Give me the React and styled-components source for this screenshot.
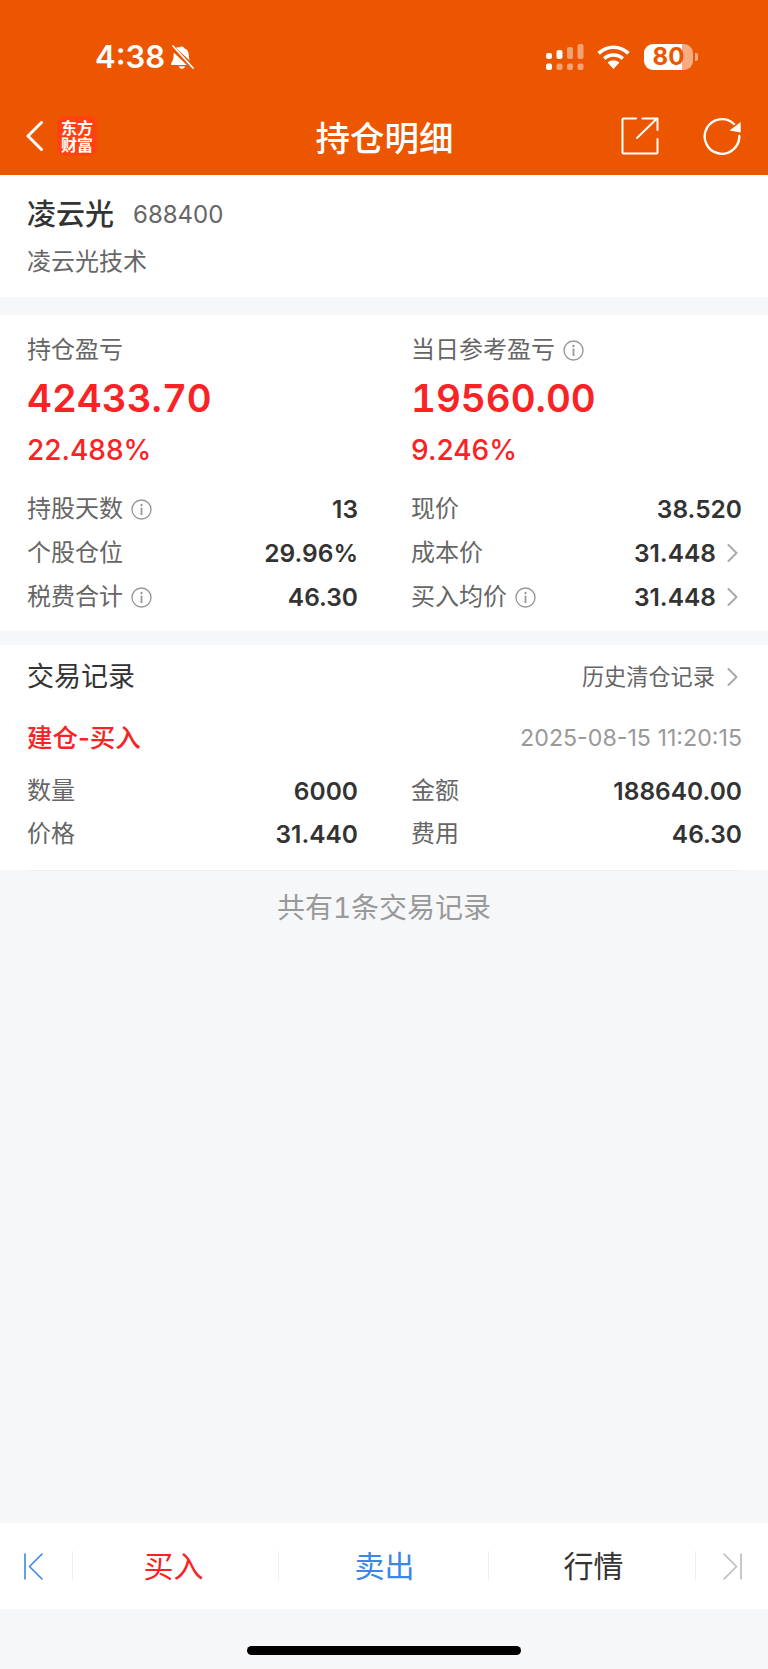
import React from "react";
import styled, { createGlobalStyle } from "styled-components";

const GlobalStyle = createGlobalStyle`
  html, body {
    margin: 0;
    padding: 0;
    background: #f6f7f9;
    font-family: Inter, "Noto Sans CJK SC", sans-serif;
  }
  * { box-sizing: border-box; }
`;

const Page = styled.div`
  width: 768px;
  height: 1669px;
  display: flex;
  flex-direction: column;
  background: #f6f7f9;
  color: #333;
  overflow: hidden;
`;

// 顶部橙色区域
const Header = styled.header`
  height: 175px;
  background: #ec5600;
  color: #fff;
`;

const StatusBar = styled.div`
  height: 100px;
  padding: 14px 75px 0 95px;
  display: flex;
  align-items: center;
  justify-content: space-between;
`;

const StatusLeft = styled.div`
  display: flex;
  align-items: center;
  gap: 5px;
`;

const Time = styled.span`
  font-size: 31px;
  font-weight: 600;
  line-height: 36px;
`;

const StatusRight = styled.div`
  display: flex;
  align-items: center;
`;

const Battery = styled.div`
  position: relative;
  width: 49px;
  height: 26px;
  margin-left: 14px;
  border-radius: 9px;
  background: linear-gradient(90deg, #fff 0 78%, rgba(255, 255, 255, 0.5) 78% 100%);
  color: #ec5600;
  font-size: 24px;
  font-weight: 700;
  line-height: 26px;
  text-align: center;

  &::after {
    content: "";
    position: absolute;
    left: 51px;
    top: 9px;
    width: 3px;
    height: 8px;
    border-radius: 0 2px 2px 0;
    background: rgba(255, 255, 255, 0.5);
  }
`;

const NavBar = styled.nav`
  height: 72px;
  padding: 0 27px 0 26px;
  display: grid;
  grid-template-columns: 1fr auto 1fr;
  align-items: center;
`;

const NavLeft = styled.div`
  display: flex;
  align-items: center;
  gap: 14px;
`;

const Logo = styled.div`
  width: 40px;
  height: 40px;
  padding: 3px 4px 0;
  border-radius: 8px;
  background: #ff4210;
  color: #fff;
  font-family: "Noto Sans CJK SC", sans-serif;
  font-size: 16px;
  font-weight: 700;
  line-height: 17px;
  text-align: center;
`;

const Title = styled.h1`
  margin: 0 0 0 2px;
  font-family: "Noto Sans CJK SC", sans-serif;
  font-size: 34.5px;
  font-weight: 500;
  line-height: 44px;
`;

const NavRight = styled.div`
  display: flex;
  justify-content: flex-end;
  align-items: center;
  gap: 44px;
`;

// 内容卡片
const Card = styled.section`
  background: #fff;
  padding: ${({ $padding }) => $padding};
  margin-top: ${({ $top }) => $top}px;
`;

const NameRow = styled.div`
  display: flex;
  align-items: center;
  gap: 19px;
`;

const StockName = styled.span`
  font-size: 29px;
  font-weight: 500;
  line-height: 34px;
  color: #333;
`;

const StockCode = styled.span`
  font-size: 24px;
  line-height: 34px;
  color: #666;
`;

const SubName = styled.div`
  margin-top: 14px;
  font-size: 24px;
  line-height: 32px;
  color: #666;
`;

const TwoColumns = styled.div`
  display: grid;
  grid-template-columns: 331px 331px;
  column-gap: 53px;
`;

const Label = styled.div`
  display: flex;
  align-items: center;
  gap: 8px;
  font-size: 24px;
  line-height: 32px;
  color: #666;
`;

const BigNumber = styled.div`
  margin-top: 8px;
  font-size: 38.5px;
  font-weight: 600;
  font-variant-numeric: tabular-nums;
  line-height: 48px;
  color: #f92224;
`;

const Percent = styled.div`
  margin-top: 11px;
  font-size: 28px;
  font-weight: 500;
  line-height: 34px;
  color: #f92224;
`;

const Rows = styled.div`
  margin-top: ${({ $top }) => $top}px;
`;

const Row = styled.div`
  height: ${({ $height }) => $height}px;
  display: flex;
  align-items: center;
  justify-content: space-between;
`;

const Value = styled.div`
  display: flex;
  align-items: center;
  gap: 11px;
  font-size: 24.5px;
  font-weight: 600;
  line-height: 32px;
  color: #333;
`;

const TradeHead = styled.div`
  display: flex;
  align-items: center;
  justify-content: space-between;
`;

const TradeTitle = styled.div`
  font-size: 27px;
  line-height: 40px;
  color: #333;
`;

const HistoryLink = styled.div`
  display: flex;
  align-items: center;
  gap: 12px;
  font-size: 22.2px;
  line-height: 40px;
  color: #666;
`;

const TradeMeta = styled.div`
  margin-top: 24px;
  display: flex;
  align-items: center;
  justify-content: space-between;
`;

const TradeType = styled.div`
  font-size: 25.5px;
  font-weight: 500;
  line-height: 34px;
  color: #f92224;
`;

const TradeTime = styled.div`
  font-size: 23.2px;
  line-height: 34px;
  color: #999;
`;

const RuleLine = styled.div`
  height: 1px;
  margin: 0 27px;
  background: #eff0f2;
`;

const FootNote = styled.div`
  margin-top: 19px;
  text-align: center;
  font-size: 28px;
  font-variant-numeric: tabular-nums;
  line-height: 36px;
  color: #999;
`;

const Spacer = styled.div`
  flex: 1;
`;

// 底部操作栏
const ActionBar = styled.div`
  height: 86px;
  background: #fff;
  display: grid;
  grid-template-columns: 73px 206px 210px 207px 72px;
  align-items: center;
`;

const ActionCell = styled.div`
  height: 30px;
  display: flex;
  align-items: center;
  justify-content: ${({ $align }) => $align || "center"};
  padding: ${({ $pad }) => $pad || "0 0 4px"};
  border-right: ${({ $end }) => ($end ? "none" : "1px solid #eeeff1")};
  font-family: "Noto Sans CJK SC", sans-serif;
  font-size: 30px;
  line-height: 26px;
  color: ${({ $color }) => $color || "#333"};
`;

const HomeArea = styled.div`
  height: 60px;
  padding-top: 37px;
  display: flex;
  justify-content: center;
`;

const HomeIndicator = styled.div`
  width: 274px;
  height: 9px;
  border-radius: 5px;
  background: #000;
`;

const InfoSvg = styled.svg`
  display: block;
  flex: none;
`;

const ChevronSvg = styled.svg`
  display: block;
  flex: none;
  margin-right: 4px;
`;

function BellOffIcon() {
  return (
    <svg width="24" height="25" viewBox="0 0 24 25">
      <path
        fill="#fff"
        d="M12 1.5c1.2 0 2 .8 2.2 1.8 3 .9 4.6 3.5 4.6 6.8 0 2.6.4 4.2 1.2 5.6L6 2.9c.5-.4 1.2-.6 1.8-.6h2c.3-.5 1-.8 2.2-.8ZM3.9 7.7 16.8 20H2.2c-1 0-1.5-.8-1-1.6 1.2-1.9 2.2-3.5 2.4-8.3 0-.9.1-1.7.3-2.4ZM8.8 21.2h6.4c-.4 1.5-1.7 2.6-3.2 2.6s-2.8-1.1-3.2-2.6Z"
      />
      <path stroke="#fff" strokeWidth="1.8" strokeLinecap="round" d="M3 1l20 22" />
    </svg>
  );
}

function SignalIcon() {
  const dim = "rgba(255,255,255,0.45)";
  return (
    <svg width="38" height="26" viewBox="0 0 38 26">
      <rect x="0" y="9" width="6" height="6" rx="2" fill="#fff" />
      <rect x="10.5" y="6" width="6" height="9" rx="2" fill="#fff" />
      <rect x="21" y="3" width="6" height="12" rx="2" fill={dim} />
      <rect x="31.5" y="0" width="6" height="15" rx="2" fill={dim} />
      <rect x="0" y="19.5" width="6" height="6.5" rx="2" fill="#fff" />
      <rect x="10.5" y="19.5" width="6" height="6.5" rx="2" fill={dim} />
      <rect x="21" y="19.5" width="6" height="6.5" rx="2" fill={dim} />
      <rect x="31.5" y="19.5" width="6" height="6.5" rx="2" fill={dim} />
    </svg>
  );
}

function WifiIcon() {
  return (
    <svg width="33" height="24" viewBox="0 0 33 24" style={{ marginLeft: 13 }}>
      <g fill="none" stroke="#fff" strokeWidth="3.6">
        <path d="M1.6 8.4C10 .2 23 .2 31.4 8.4" />
        <path d="M7.2 13.6c5.2-4.8 13.4-4.8 18.6 0" />
      </g>
      <path fill="#fff" d="M10.6 17.4c3.4-2.6 8.4-2.6 11.8 0L16.5 24Z" />
    </svg>
  );
}

function BackIcon() {
  return (
    <svg width="17" height="30" viewBox="0 0 17 30">
      <path
        d="M15.5 1.5 2 15l13.5 13.5"
        fill="none"
        stroke="#fff"
        strokeWidth="3"
        strokeLinecap="round"
        strokeLinejoin="round"
      />
    </svg>
  );
}

function ShareIcon() {
  return (
    <svg width="38" height="38" viewBox="0 0 38 38" fill="none" stroke="#fff" strokeWidth="2" strokeLinecap="round" strokeLinejoin="round">
      <path d="M15 1.5H2.5a1 1 0 0 0-1 1v33a1 1 0 0 0 1 1h33a1 1 0 0 0 1-1V22" />
      <path d="M16 21 36 1.5M21.5 1.5H36.5V13" />
    </svg>
  );
}

function RefreshIcon() {
  return (
    <svg width="38" height="38" viewBox="0 0 38 38">
      <path d="M31 7A17.3 17.3 0 1 0 36.3 19" fill="none" stroke="#fff" strokeWidth="2.4" strokeLinecap="round" />
      <path d="M37.7 5V15.5L26.5 13.5Z" fill="#fff" />
    </svg>
  );
}

function InfoIcon() {
  return (
    <InfoSvg width="21" height="21" viewBox="0 0 21 21">
      <circle cx="10.5" cy="10.5" r="9.5" fill="none" stroke="#999" strokeWidth="1.4" />
      <circle cx="10.5" cy="6" r="1.2" fill="#999" />
      <rect x="9.6" y="8.6" width="1.8" height="7.4" fill="#999" />
    </InfoSvg>
  );
}

function ChevronIcon({ color = "#aaa" }) {
  return (
    <ChevronSvg width="11" height="18" viewBox="0 0 11 18">
      <path d="M1.5 1 9.5 9l-8 8" fill="none" stroke={color} strokeWidth="2" strokeLinecap="round" strokeLinejoin="round" />
    </ChevronSvg>
  );
}

function FirstIcon() {
  return (
    <svg width="19" height="27" viewBox="0 0 19 27" fill="none" stroke="#3d86e8" strokeWidth="1.6" strokeLinecap="round" strokeLinejoin="round">
      <path d="M1 1v25M18 1 5.5 13.5 18 26" />
    </svg>
  );
}

function LastIcon() {
  return (
    <svg width="19" height="27" viewBox="0 0 19 27" fill="none" stroke="#bbb" strokeWidth="1.6" strokeLinecap="round" strokeLinejoin="round">
      <path d="M18 1v25M1 1l12.5 12.5L1 26" />
    </svg>
  );
}

const holdingRows = [
  [
    { label: "持股天数", info: true, value: "13" },
    { label: "个股仓位", value: "29.96%" },
    { label: "税费合计", info: true, value: "46.30" },
  ],
  [
    { label: "现价", value: "38.520" },
    { label: "成本价", value: "31.448", more: true },
    { label: "买入均价", info: true, value: "31.448", more: true },
  ],
];

const tradeRows = [
  [
    { label: "数量", value: "6000" },
    { label: "价格", value: "31.440" },
  ],
  [
    { label: "金额", value: "188640.00" },
    { label: "费用", value: "46.30" },
  ],
];

export default function App() {
  return (
    <Page>
      <GlobalStyle />
      <Header>
        <StatusBar>
          <StatusLeft>
            <Time>4:38</Time>
            <BellOffIcon />
          </StatusLeft>
          <StatusRight>
            <SignalIcon />
            <WifiIcon />
            <Battery>80</Battery>
          </StatusRight>
        </StatusBar>
        <NavBar>
          <NavLeft>
            <BackIcon />
            <Logo>东方财富</Logo>
          </NavLeft>
          <Title>持仓明细</Title>
          <NavRight>
            <ShareIcon />
            <RefreshIcon />
          </NavRight>
        </NavBar>
      </Header>

      <Card $padding="23px 27px 19px">
        <NameRow>
          <StockName>凌云光</StockName>
          <StockCode>688400</StockCode>
        </NameRow>
        <SubName>凌云光技术</SubName>
      </Card>

      <Card $top={18} $padding="19px 26px 12px 27px">
        <TwoColumns>
          <div>
            <Label>持仓盈亏</Label>
            <BigNumber>42433.70</BigNumber>
            <Percent>22.488%</Percent>
          </div>
          <div>
            <Label>
              当日参考盈亏
              <InfoIcon />
            </Label>
            <BigNumber>19560.00</BigNumber>
            <Percent>9.246%</Percent>
          </div>
        </TwoColumns>
        <Rows $top={20}>
          <TwoColumns>
            {holdingRows.map((column, i) => (
              <div key={i}>
                {column.map((item) => (
                  <Row $height={44} key={item.label}>
                    <Label>
                      {item.label}
                      {item.info && <InfoIcon />}
                    </Label>
                    <Value>
                      {item.value}
                      {item.more && <ChevronIcon />}
                    </Value>
                  </Row>
                ))}
              </div>
            ))}
          </TwoColumns>
        </Rows>
      </Card>

      <Card $top={14} $padding="12px 26px 15px 27px">
        <TradeHead>
          <TradeTitle>交易记录</TradeTitle>
          <HistoryLink>
            历史清仓记录
            <ChevronIcon />
          </HistoryLink>
        </TradeHead>
        <TradeMeta>
          <TradeType>建仓-买入</TradeType>
          <TradeTime>2025-08-15 11:20:15</TradeTime>
        </TradeMeta>
        <Rows $top={14}>
          <TwoColumns>
            {tradeRows.map((column, i) => (
              <div key={i}>
                {column.map((item) => (
                  <Row $height={43} key={item.label}>
                    <Label>{item.label}</Label>
                    <Value>{item.value}</Value>
                  </Row>
                ))}
              </div>
            ))}
          </TwoColumns>
        </Rows>
      </Card>
      <RuleLine />
      <FootNote>共有1条交易记录</FootNote>

      <Spacer />

      <ActionBar>
        <ActionCell $align="flex-start" $pad="0 0 0 24px">
          <FirstIcon />
        </ActionCell>
        <ActionCell $color="#f92224" $pad="0 4px 4px 0">买入</ActionCell>
        <ActionCell $color="#3d86e8" $pad="0 0 4px 2px">卖出</ActionCell>
        <ActionCell $pad="0 0 4px 3px">行情</ActionCell>
        <ActionCell $end $align="flex-start" $pad="0 0 0 27px">
          <LastIcon />
        </ActionCell>
      </ActionBar>
      <HomeArea>
        <HomeIndicator />
      </HomeArea>
    </Page>
  );
}
